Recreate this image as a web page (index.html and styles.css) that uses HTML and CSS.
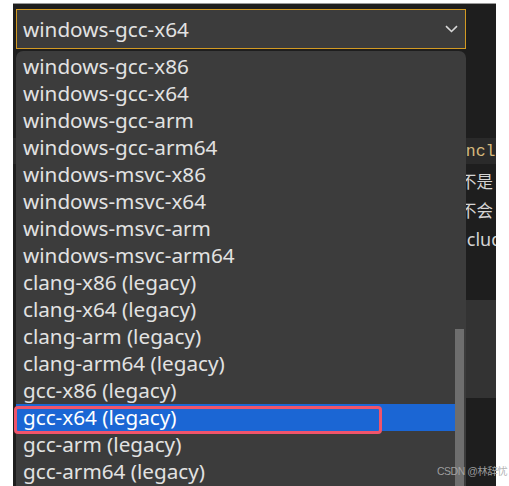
FILE: index.html
```html
<!DOCTYPE html>
<html lang="en">
<head>
  <meta charset="UTF-8" />
  <title>Configuration picker</title>
  <link rel="stylesheet" href="styles.css">
</head>
<body>
  <div class="editor">
    <div class="code">
      <div class="code-line mono current">#include</div>
      <div class="code-line cjk">不是</div>
      <div class="code-line cjk">不会</div>
      <div class="code-line sans">includ</div>
      <div class="code-block"></div>
    </div>

    <div class="picker">
      <div class="select">
        <span>windows-gcc-x64</span>
        <svg class="chevron" width="13" height="8" viewBox="0 0 13 8">
          <path d="M1 1.2 L6.5 6.5 L12 1.2" fill="none" stroke="#d8d8d8" stroke-width="1.6"/>
        </svg>
      </div>
      <div class="list">
        <div class="item">windows-gcc-x86</div>
        <div class="item">windows-gcc-x64</div>
        <div class="item">windows-gcc-arm</div>
        <div class="item">windows-gcc-arm64</div>
        <div class="item">windows-msvc-x86</div>
        <div class="item">windows-msvc-x64</div>
        <div class="item">windows-msvc-arm</div>
        <div class="item">windows-msvc-arm64</div>
        <div class="item">clang-x86 (legacy)</div>
        <div class="item">clang-x64 (legacy)</div>
        <div class="item">clang-arm (legacy)</div>
        <div class="item">clang-arm64 (legacy)</div>
        <div class="item">gcc-x86 (legacy)</div>
        <div class="item selected">gcc-x64 (legacy)<span class="mark"></span></div>
        <div class="item">gcc-arm (legacy)</div>
        <div class="item">gcc-arm64 (legacy)</div>
        <div class="scrollbar"></div>
      </div>
    </div>
  </div>

  <div class="watermark">CSDN @林辞忧</div>
</body>
</html>
```

FILE: styles.css
```css
body {
  margin: 0;
  background: #fff;
  position: relative;
  height: 486px;
  overflow: hidden;
  font-family: "Noto Sans", "Open Sans", sans-serif;
}
.editor {
  position: relative;
  margin: 3px 0 0 13px;
  width: 483px;
  height: 482px;
  border-top: 1px solid #9a9a9a;
  background: #1e1e1e;
  overflow: hidden;
}
.code {
  padding-top: 134px;
  color: #d4d4d4;
}
.code-line {
  height: 29px;
  line-height: 29px;
  white-space: nowrap;
}
.mono {
  font-family: "Liberation Mono", monospace;
  font-size: 16.5px;
  color: #d7ba7d;
  padding-left: 433px;
}
.current {
  background: #2a2a2a;
  height: 26px;
  line-height: 27px;
  margin-bottom: 3px;
}
.cjk {
  font-family: "Noto Sans CJK SC", sans-serif;
  font-size: 16.5px;
  padding-left: 447px;
}
.sans {
  font-size: 18px;
  padding-left: 438px;
}
.code-block {
  margin: 46px 0 0 451px;
  height: 98px;
  background: #333;
}
.picker {
  position: absolute;
  left: 3px;
  top: 5px;
  width: 450px;
  bottom: 0;
  display: flex;
  flex-direction: column;
  gap: 2px;
}
.select {
  height: 38px;
  border: 1px solid #d29a23;
  background: #3c3c3c;
  color: #e2e2e2;
  font-size: 20.7px;
  display: flex;
  align-items: center;
  justify-content: space-between;
  padding: 0 7px 0 6px;
}
.chevron {
  margin-top: -1px;
}
.list {
  position: relative;
  flex: 1;
  background: #3c3c3c;
  border-radius: 7px 7px 0 0;
  padding: 2px 11px 0 0;
  color: #e2e2e2;
  font-size: 20.7px;
}
.item {
  position: relative;
  height: 27px;
  line-height: 26px;
  padding-left: 7px;
  white-space: nowrap;
}
.selected {
  background: #1b66d4;
  color: #fff;
}
.mark {
  position: absolute;
  left: -2px;
  top: 2px;
  width: 362px;
  height: 22px;
  border: 3px solid #f0546b;
  border-radius: 4px;
}
.scrollbar {
  position: absolute;
  left: 439px;
  top: 278px;
  width: 9px;
  bottom: 0;
  background: #6e6e6e;
}
.watermark {
  position: absolute;
  left: 437px;
  top: 463px;
  font-size: 10.5px;
  letter-spacing: -0.5px;
  color: rgba(170, 170, 170, 0.9);
  font-family: "Liberation Sans", "Noto Sans CJK SC", sans-serif;
  white-space: nowrap;
}
```
